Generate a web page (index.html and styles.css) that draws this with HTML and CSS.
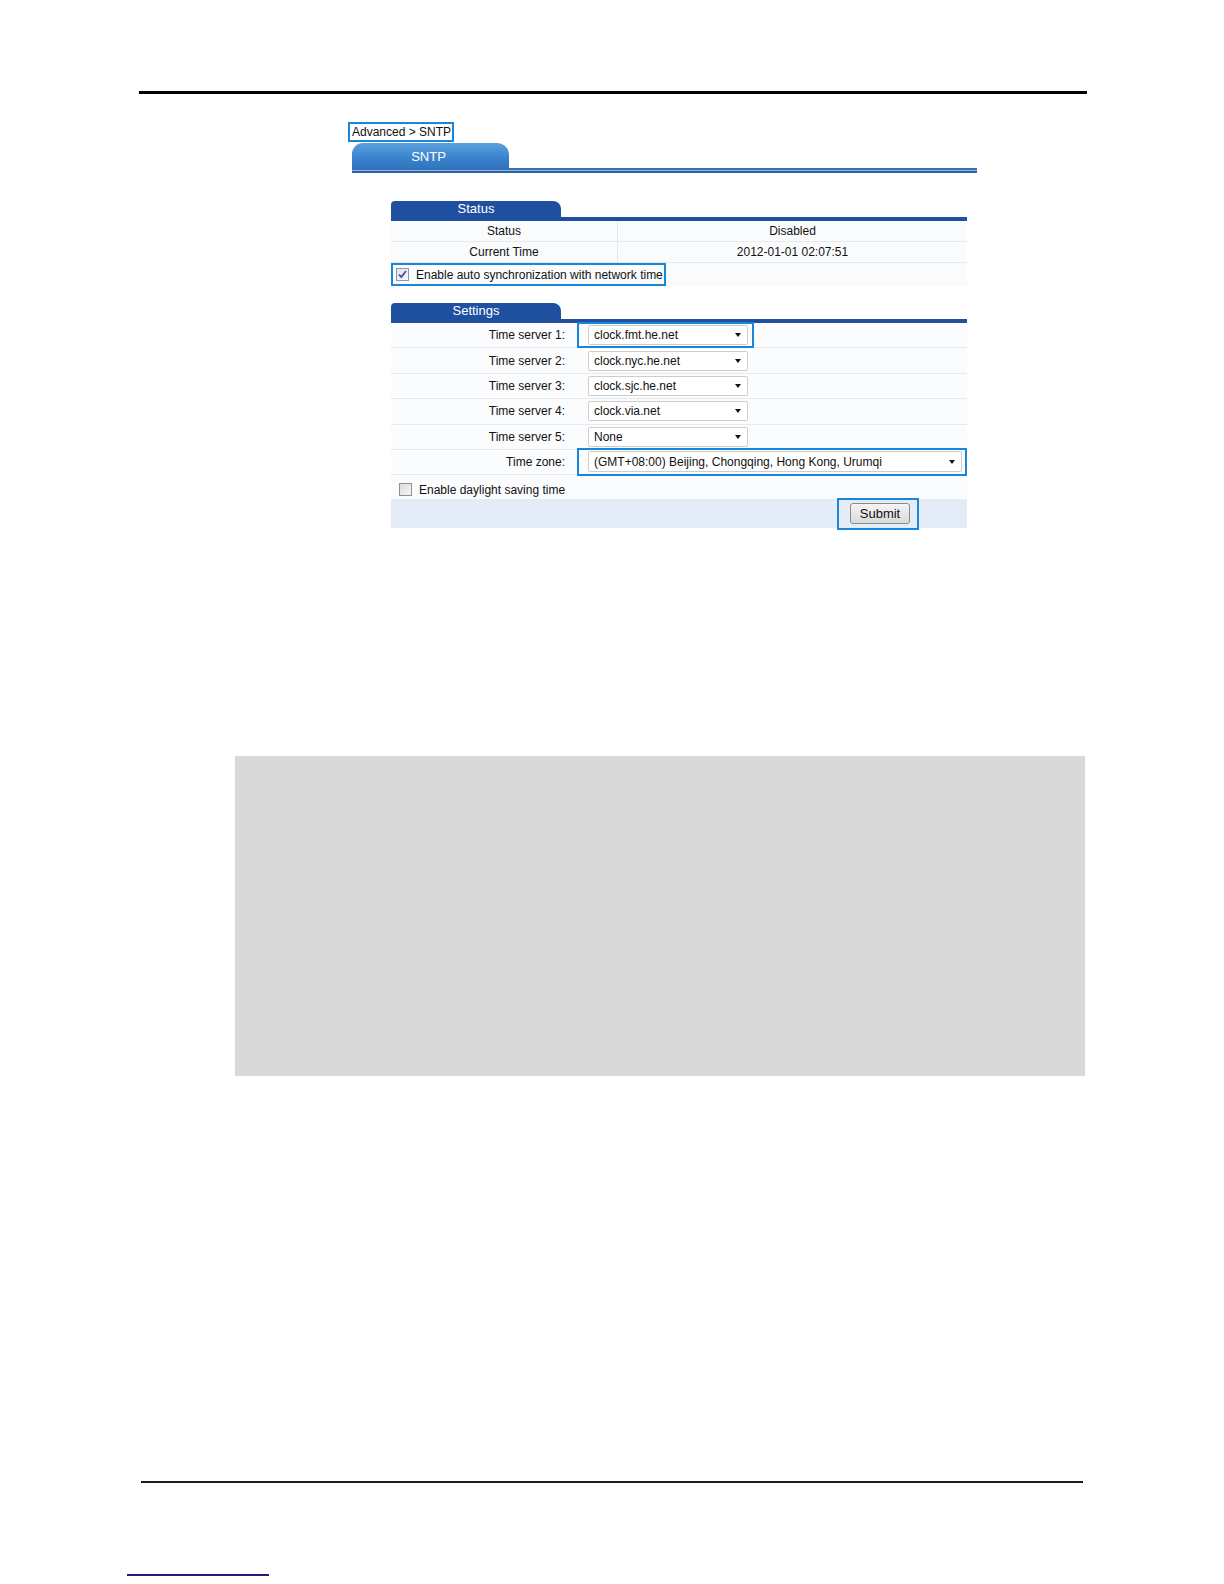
FILE: index.html
```html
<!DOCTYPE html>
<html lang="en">
<head>
<meta charset="utf-8">
<title>Advanced &gt; SNTP</title>
<link rel="stylesheet" href="styles.css">
</head>
<body>
<div class="page">
  <div class="rule-top"></div>

  <div class="shot">
    <div class="crumb">Advanced &gt; SNTP</div>
    <div class="pagetab">SNTP</div>
    <div class="pagetab-line"></div>

    <section class="panel panel-status">
      <div class="panel-head"><div class="panel-tab">Status</div></div>
      <div class="srow">
        <div class="scell scell-l">Status</div>
        <div class="scell scell-r">Disabled</div>
      </div>
      <div class="srow">
        <div class="scell scell-l">Current Time</div>
        <div class="scell scell-r">2012-01-01 02:07:51</div>
      </div>
      <div class="srow srow-check">
        <span class="hl hl-sync">
          <span class="cb cb-on"><svg width="13" height="13" viewBox="0 0 13 13"><path d="M3 6.5l2.3 2.6L10 3" fill="none" stroke="#4b4aa0" stroke-width="1.8"/></svg></span>
          <span class="cb-label">Enable auto synchronization with network time</span>
        </span>
      </div>
    </section>

    <section class="panel panel-settings">
      <div class="panel-head"><div class="panel-tab">Settings</div></div>

      <div class="frow">
        <div class="flabel">Time server 1:</div>
        <div class="fval"><span class="selwrap hl-on"><span class="select"><span>clock.fmt.he.net</span><i class="arrow"></i></span></span></div>
      </div>
      <div class="frow">
        <div class="flabel">Time server 2:</div>
        <div class="fval"><span class="selwrap"><span class="select"><span>clock.nyc.he.net</span><i class="arrow"></i></span></span></div>
      </div>
      <div class="frow">
        <div class="flabel">Time server 3:</div>
        <div class="fval"><span class="selwrap"><span class="select"><span>clock.sjc.he.net</span><i class="arrow"></i></span></span></div>
      </div>
      <div class="frow">
        <div class="flabel">Time server 4:</div>
        <div class="fval"><span class="selwrap"><span class="select"><span>clock.via.net</span><i class="arrow"></i></span></span></div>
      </div>
      <div class="frow">
        <div class="flabel">Time server 5:</div>
        <div class="fval"><span class="selwrap"><span class="select"><span>None</span><i class="arrow"></i></span></span></div>
      </div>
      <div class="frow">
        <div class="flabel">Time zone:</div>
        <div class="fval"><span class="selwrap selwrap-tz hl-on"><span class="select select-tz"><span>(GMT+08:00) Beijing, Chongqing, Hong Kong, Urumqi</span><i class="arrow"></i></span></span></div>
      </div>
      <div class="frow frow-dst">
        <span class="cb cb-off"></span>
        <span class="cb-label">Enable daylight saving time</span>
      </div>
      <div class="ffoot">
        <span class="hl hl-submit"><span class="btn">Submit</span></span>
      </div>
    </section>
  </div>

  <div class="graybox"></div>
  <div class="rule-bottom"></div>
  <div class="footlink"></div>
</div>
</body>
</html>
```

FILE: styles.css
```css
html, body {
  margin: 0;
  padding: 0;
  background: #ffffff;
}

body {
  font-family: "Liberation Sans", Arial, sans-serif;
  color: #000;
}

.page {
  width: 1224px;
  padding-top: 91px;
}

.rule-top {
  margin-left: 139px;
  width: 948px;
  height: 3px;
  background: #000;
}

.shot {
  margin-left: 348px;
  margin-top: 28px;
}

.crumb {
  width: fit-content;
  border: 2px solid #1a86d9;
  padding: 0 1px 0 2px;
  height: 16px;
  line-height: 17px;
  font-size: 12px;
  color: #111;
}

.pagetab {
  margin-top: 1px;
  margin-left: 4px;
  width: 157px;
  height: 25px;
  border-radius: 11px 12px 0 0;
  background: linear-gradient(#5aa0de, #3a83cc 60%, #2f76c1);
  color: #fff;
  font-size: 13px;
  text-align: center;
  line-height: 28px;
  box-sizing: border-box;
  padding-right: 4px;
}

.pagetab-line {
  margin-left: 4px;
  width: 625px;
  height: 5px;
  box-sizing: border-box;
  border-top: 2px solid #3670b6;
  border-bottom: 2px solid #2c62a8;
  background: #8fb3dd;
}

/* ---------- panels ---------- */
.panel {
  margin-left: 43px;
  width: 576px;
  font-size: 12px;
}

.panel-status {
  margin-top: 28px;
}

.panel-settings {
  margin-top: 17px;
}

.panel-head {
  border-bottom: 4px solid #1f509f;
}

.panel-tab {
  width: 170px;
  height: 16px;
  line-height: 16px;
  background: #1f509f;
  color: #fff;
  font-size: 13px;
  text-align: center;
  border-radius: 4px 8px 0 0;
}

/* status rows */
.srow {
  display: flex;
  height: 21px;
  box-sizing: border-box;
  border-bottom: 1px solid #e6eaef;
  background: #fafbfc;
}

.scell {
  text-align: center;
  line-height: 21px;
  color: #111;
}

.scell-l {
  width: 226px;
  border-right: 1px solid #e6eaef;
}

.scell-r {
  flex: 1;
}

.srow-check {
  height: 23px;
  border-bottom: none;
  align-items: stretch;
}

.hl {
  border: 2px solid #1a86d9;
  box-sizing: border-box;
}

.hl-sync {
  display: flex;
  align-items: center;
  width: 275px;
  padding-left: 3px;
}

.cb {
  display: inline-block;
  width: 13px;
  height: 13px;
  box-sizing: border-box;
  flex: none;
}

.cb-on {
  border: 1px solid #8d98ab;
  background: linear-gradient(135deg, #dfe3ea, #f7f8fa);
}

.cb-on svg {
  display: block;
  margin: -1px 0 0 -1px;
}

.cb-off {
  border: 1px solid #8e8f8f;
  background: linear-gradient(135deg, #dcdcdc, #f6f6f6);
}

.cb-label {
  margin-left: 7px;
  color: #111;
  font-size: 12px;
}

/* settings rows */
.frow {
  display: flex;
  align-items: center;
  height: 25.4px;
  box-sizing: border-box;
  border-bottom: 1px solid #e6eaef;
  background: #fbfcfd;
}

.flabel {
  width: 184px;
  box-sizing: border-box;
  padding-right: 10px;
  text-align: right;
  color: #111;
}

.fval {
  flex: 1;
  display: flex;
  align-items: center;
  padding-left: 2px;
}

.selwrap {
  display: inline-flex;
  align-items: center;
  border: 2px solid transparent;
  padding: 1px 4px 1px 9px;
}

.selwrap.hl-on {
  border-color: #1a86d9;
}

.selwrap-tz {
  padding: 1px 3px 2px 9px;
}

.select {
  display: flex;
  align-items: center;
  justify-content: space-between;
  width: 160px;
  height: 20px;
  box-sizing: border-box;
  border: 1px solid #cdcdcd;
  border-radius: 2px;
  background: #fff;
  padding: 0 6px 0 5px;
  font-size: 12px;
  color: #111;
}

.select-tz {
  width: 374px;
  height: 21px;
}

.arrow {
  width: 0;
  height: 0;
  border-left: 3.5px solid transparent;
  border-right: 3.5px solid transparent;
  border-top: 4px solid #111;
}

.frow-dst {
  height: 24px;
  border-bottom: none;
  padding-left: 8px;
  padding-top: 5px;
}

.ffoot {
  display: flex;
  justify-content: flex-end;
  align-items: center;
  height: 29px;
  background: #e4edf7;
  padding-right: 48px;
}

.hl-submit {
  display: inline-block;
  padding: 3px 7px 4px 11px;
}

.btn {
  display: block;
  width: 60px;
  height: 21px;
  box-sizing: border-box;
  border: 1px solid #8c8c8c;
  border-radius: 3px;
  background: linear-gradient(#f5f5f5, #dadada);
  font-size: 13px;
  line-height: 19px;
  text-align: center;
  color: #111;
}

/* ---------- document parts ---------- */
.graybox {
  margin-top: 228px;
  margin-left: 235px;
  width: 850px;
  height: 320px;
  background: #d9d9d9;
}

.rule-bottom {
  margin-top: 405px;
  margin-left: 141px;
  width: 942px;
  height: 2px;
  background: #1c1c1c;
}

.footlink {
  margin-top: 91px;
  margin-left: 127px;
  width: 142px;
  height: 2px;
  background: #1f1f7a;
}
```
